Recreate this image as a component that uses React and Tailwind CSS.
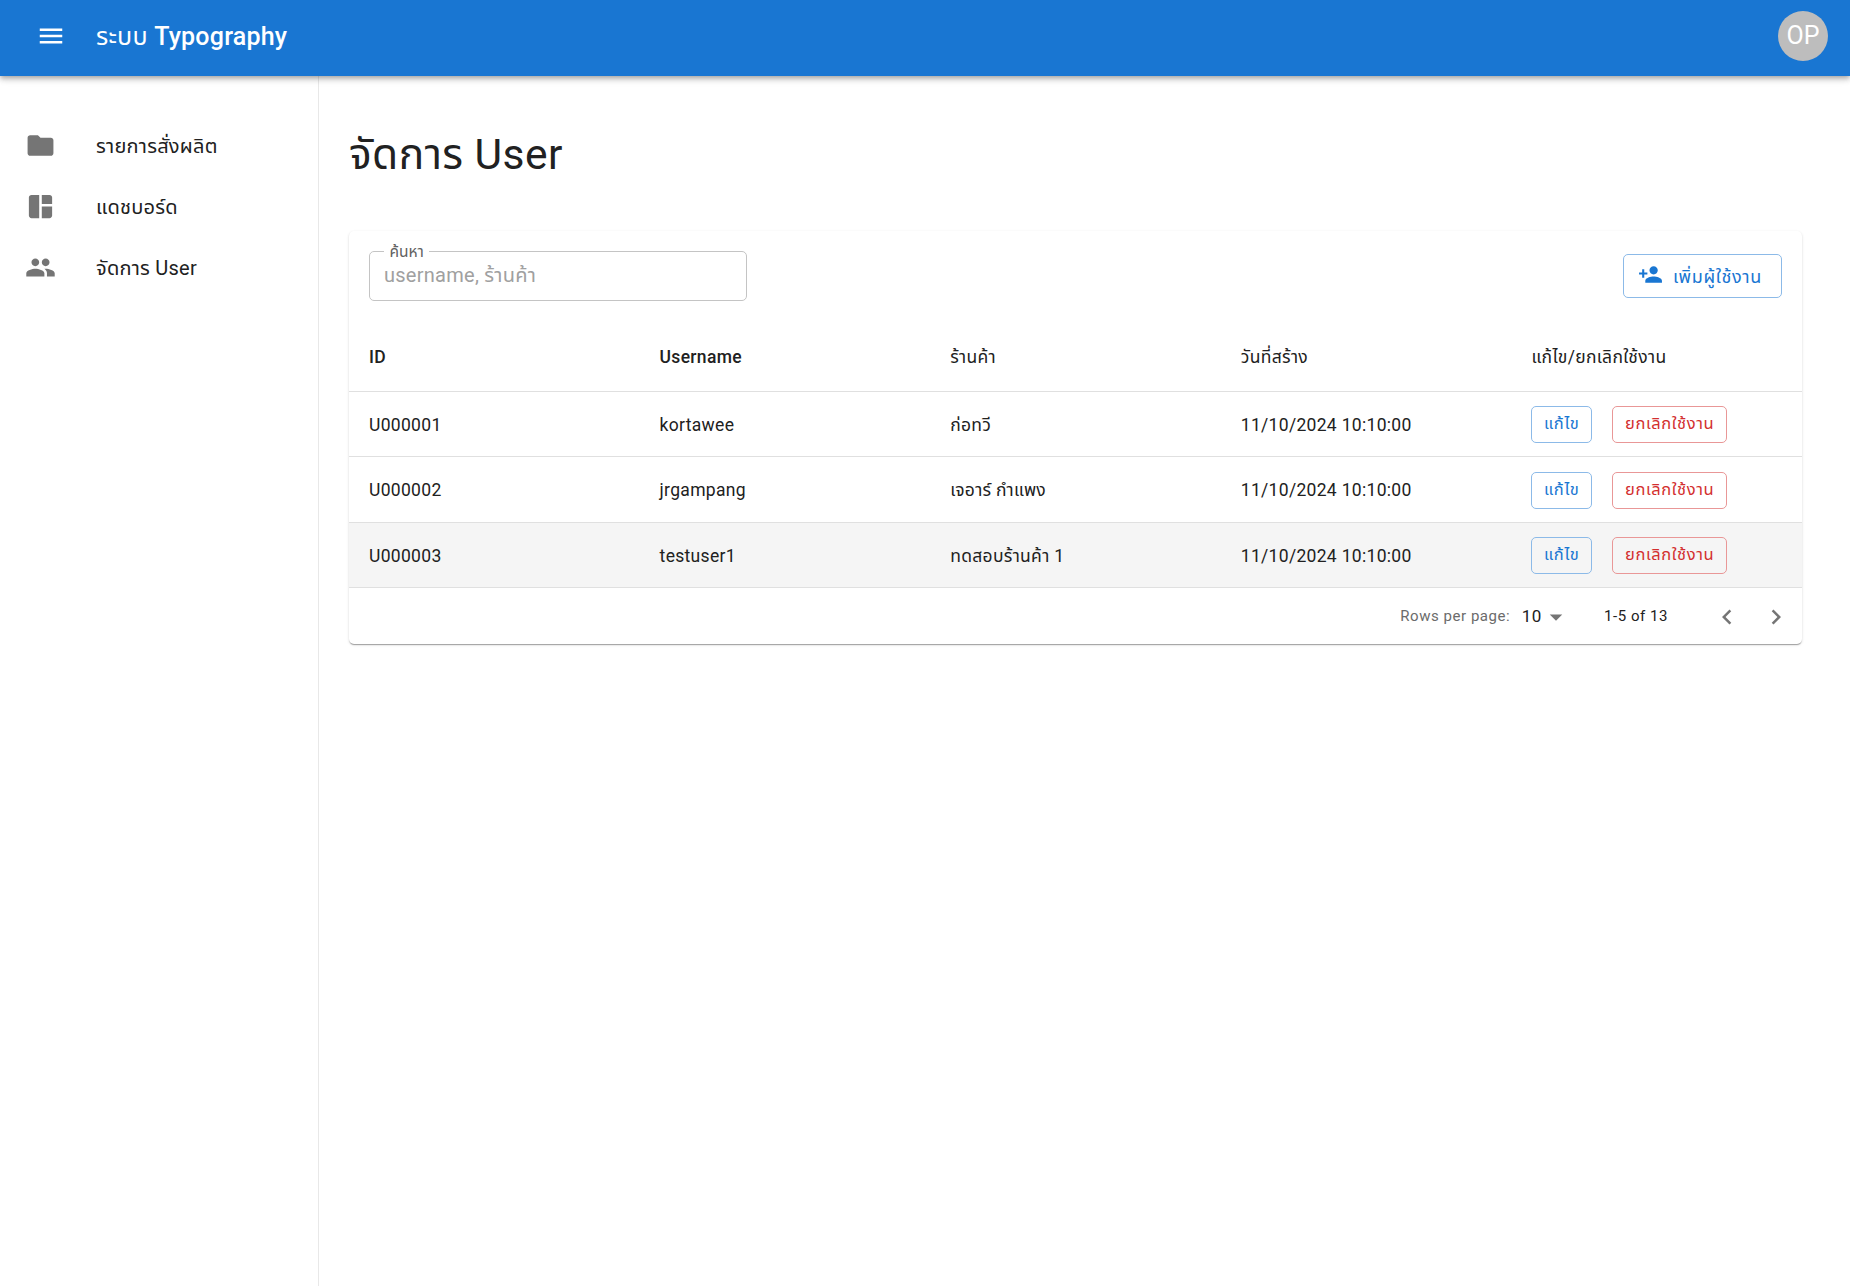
import React from 'react';

const font = { fontFamily: 'Roboto, "Noto Sans Thai", "Noto Sans", sans-serif' };

const Icon = ({ d, className }) => (
    <svg viewBox="0 0 24 24" fill="currentColor" className={className}>
        <path d={d} />
    </svg>
);

const icons = {
    menu: 'M3 18h18v-2H3v2zm0-5h18v-2H3v2zm0-7v2h18V6H3z',
    folder: 'M10 4H4c-1.1 0-1.99.9-1.99 2L2 18c0 1.1.9 2 2 2h16c1.1 0 2-.9 2-2V8c0-1.1-.9-2-2-2h-8l-2-2z',
    dashboard: 'M11 21H5c-1.1 0-2-.9-2-2V5c0-1.1.9-2 2-2h6v18zm2 0h6c1.1 0 2-.9 2-2v-7h-8v9zm8-11V5c0-1.1-.9-2-2-2h-6v7h8z',
    people: 'M16 11c1.66 0 2.99-1.34 2.99-3S17.66 5 16 5c-1.66 0-3 1.34-3 3s1.34 3 3 3zm-8 0c1.66 0 2.99-1.34 2.99-3S9.66 5 8 5C6.34 5 5 6.34 5 8s1.34 3 3 3zm0 2c-2.33 0-7 1.17-7 3.5V19h14v-2.5c0-2.33-4.67-3.5-7-3.5zm8 0c-.29 0-.62.02-.97.05 1.16.84 1.97 1.97 1.97 3.45V19h6v-2.5c0-2.33-4.67-3.5-7-3.5z',
    personAdd: 'M15 12c2.21 0 4-1.79 4-4s-1.79-4-4-4-4 1.79-4 4 1.79 4 4 4zm-9-2V7H4v3H1v2h3v3h2v-3h3v-2H6zm9 4c-2.67 0-8 1.34-8 4v2h16v-2c0-2.66-5.33-4-8-4z',
    dropDown: 'M7 10l5 5 5-5z',
    left: 'M15.41 7.41 14 6l-6 6 6 6 1.41-1.41L10.83 12z',
    right: 'M10 6 8.59 7.41 13.17 12l-4.58 4.59L10 18l6-6z',
};

const navItems = [
    { label: 'รายการสั่งผลิต', icon: icons.folder },
    { label: 'แดชบอร์ด', icon: icons.dashboard },
    { label: 'จัดการ User', icon: icons.people },
];

const rows = [
    { id: 'U000001', username: 'kortawee', shop: 'ก่อทวี', created: '11/10/2024 10:10:00' },
    { id: 'U000002', username: 'jrgampang', shop: 'เจอาร์ กำแพง', created: '11/10/2024 10:10:00' },
    { id: 'U000003', username: 'testuser1', shop: 'ทดสอบร้านค้า 1', created: '11/10/2024 10:10:00', hover: true },
];

const Header = () => (
    <header className="relative z-10 flex h-[76px] items-center justify-between bg-[#1976d2] pb-[4px] pl-[36px] pr-[22px] text-white shadow-[0_2px_4px_-1px_rgba(0,0,0,0.2),0_4px_5px_0_rgba(0,0,0,0.14),0_1px_10px_0_rgba(0,0,0,0.12)]">
        <div className="flex items-center">
            <Icon d={icons.menu} className="h-[30px] w-[30px]" />
            <span className="ml-[30px] mt-[2px] text-[25px] font-medium tracking-[0.21px]">
                <span className="font-normal">ระบบ</span> Typography
            </span>
        </div>
        <div className="flex h-[50px] w-[50px] items-center justify-center rounded-full bg-[#bdbdbd] text-[25px]">OP</div>
    </header>
);

const Sidebar = () => (
    <aside className="w-[319px] shrink-0 border-r border-[#e8e8e8] pt-[39px]">
        {navItems.map(item => (
            <div key={item.label} className="flex h-[61px] items-center pl-[25px] text-[20px] tracking-[0.25px] text-[#212121]">
                <Icon d={item.icon} className="h-[31px] w-[31px] text-[#757575]" />
                <span className="ml-[40px]">{item.label}</span>
            </div>
        ))}
    </aside>
);

const RowButton = ({ children, red }) => (
    <button className={`h-[37px] rounded-[5px] border px-[11.5px] text-[16.5px] tracking-[0.62px] ${red ? 'border-[#e99797] text-[#d32f2f]' : 'border-[#8cbae8] text-[#1976d2]'}`}>
        {children}
    </button>
);

const Table = () => (
    <table className="w-full table-fixed border-collapse text-[17.5px] tracking-[0.31px] text-[#212121]">
        <thead>
            <tr className="h-[70px] border-b border-[#e0e0e0] text-left">
                <th className="pl-[20px] pt-[2px] font-medium">ID</th>
                <th className="pl-[20px] pt-[2px] font-medium">Username</th>
                <th className="pl-[20px] pt-[2px] font-normal">ร้านค้า</th>
                <th className="pl-[20px] pt-[2px] font-normal">วันที่สร้าง</th>
                <th className="pl-[20px] pt-[2px] font-normal">แก้ไข/ยกเลิกใช้งาน</th>
            </tr>
        </thead>
        <tbody>
            {rows.map(row => (
                <tr key={row.id} className={`h-[65.5px] border-b border-[#e0e0e0] ${row.hover ? 'bg-[#f5f5f5]' : ''}`}>
                    <td className="pl-[20px] pt-[2px]">{row.id}</td>
                    <td className="pl-[20px] pt-[2px]">{row.username}</td>
                    <td className="pl-[20px] pt-[2px]">{row.shop}</td>
                    <td className="pl-[20px] pt-[2px]">{row.created}</td>
                    <td className="pl-[20px] pt-[2px]">
                        <div className="flex items-center gap-[20.5px]">
                            <RowButton>แก้ไข</RowButton>
                            <RowButton red>ยกเลิกใช้งาน</RowButton>
                        </div>
                    </td>
                </tr>
            ))}
        </tbody>
    </table>
);

const Pagination = () => (
    <div className="flex h-[56px] items-center justify-end pr-[11px] pt-[1px] text-[15px] tracking-[0.55px]">
        <span className="text-[#6b6b6b]">Rows per page:</span>
        <span className="ml-[11.5px] text-[17px] text-[#212121]">10</span>
        <Icon d={icons.dropDown} className="ml-[-1px] h-[30px] w-[30px] text-[#757575]" />
        <span className="ml-[33px] text-[#212121]">1-5 of 13</span>
        <Icon d={icons.left} className="ml-[44px] h-[30px] w-[30px] text-[#757575]" />
        <Icon d={icons.right} className="ml-[19px] h-[30px] w-[30px] text-[#757575]" />
    </div>
);

export default function App() {
    return (
        <div className="flex h-[1286px] flex-col bg-white" style={font}>
            <Header />
            <div className="flex flex-1">
                <Sidebar />
                <main className="flex-1 pl-[30px] pr-[48px] pt-[53px]">
                    <h1 className="h-[54px] text-[42.5px] leading-[52px] tracking-[0.45px] text-[#212121]">จัดการ User</h1>
                    <section className="mt-[48px] rounded-[5px] bg-white shadow-[0_2px_1px_-1px_rgba(0,0,0,0.2),0_1px_1px_0_rgba(0,0,0,0.14),0_1px_3px_0_rgba(0,0,0,0.12)]">
                        <div className="flex h-[90px] items-center justify-between px-[20px]">
                            <fieldset className="-mt-[7px] h-[57px] w-[378px] rounded-[5px] border border-[#c4c4c4] pl-[14px]">
                                <legend className="relative top-[1px] px-[5.5px] text-[15.5px] leading-[14px] text-[#616161]">ค้นหา</legend>
                                <input
                                    placeholder="username, ร้านค้า"
                                    className="-mt-[3px] block h-[40px] w-full bg-transparent text-[20px] tracking-[0.26px] outline-none placeholder:text-[#a0a0a0]"
                                />
                            </fieldset>
                            <button className="flex h-[44px] w-[159px] items-center rounded-[5px] border border-[#8cbae8] pl-[14px] text-[18px] tracking-[0.65px] text-[#1976d2]">
                                <Icon d={icons.personAdd} className="mr-[10px] -mt-[4px] h-[25px] w-[25px]" />
                                เพิ่มผู้ใช้งาน
                            </button>
                        </div>
                        <Table />
                        <Pagination />
                    </section>
                </main>
            </div>
        </div>
    );
}
